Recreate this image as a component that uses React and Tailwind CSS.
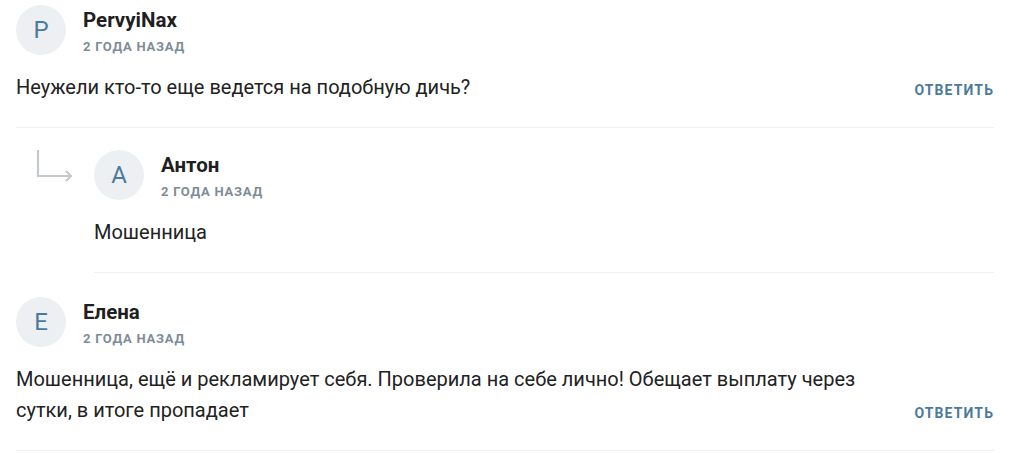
import React from "react";

function Avatar({ letter }) {
  return (
    <div className="flex h-[50px] w-[50px] shrink-0 items-center justify-center rounded-full bg-[#edf0f3] text-[24px] font-normal text-[#4b7a9b]">
      {letter}
    </div>
  );
}

function Header({ letter, name }) {
  return (
    <div className="flex items-center gap-[17px]">
      <Avatar letter={letter} />
      <div className="flex flex-col pt-[2px]">
        <div className="text-[20.5px] font-bold leading-[24px] text-[#1f1f1f]">{name}</div>
        <div className="mt-[7px] text-[13px] font-bold leading-[16px] tracking-[0.06em] text-[#7e8c97]">2 ГОДА НАЗАД</div>
      </div>
    </div>
  );
}

function Reply() {
  return (
    <button className="shrink-0 text-[14px] font-bold leading-[25px] tracking-[0.08em] text-[#4b7a9b]">
      ОТВЕТИТЬ
    </button>
  );
}

function Arrow() {
  return (
    <svg width="40" height="40" viewBox="0 0 40 40" fill="none" className="shrink-0">
      <path d="M2 0 V26 H35" stroke="#c4c9ce" strokeWidth="2.2" />
      <path d="M30 21 L35 26 L30 31" stroke="#c4c9ce" strokeWidth="2.2" />
    </svg>
  );
}

export default function App() {
  return (
    <div className="w-[1024px] bg-white px-4" style={{ fontFamily: "Roboto, 'Liberation Sans', sans-serif" }}>
      <div className="mr-[14px] border-b border-[#eef0f2] pt-[5px] pb-[24px]">
        <Header letter="P" name="PervyiNax" />
        <div className="mt-[17px] flex items-end justify-between">
          <p className="text-[20px] leading-[31px] text-[#222]">Неужели кто-то еще ведется на подобную дичь?</p>
          <Reply />
        </div>
      </div>
      <div className="mr-[14px] flex">
        <div className="w-[78px] shrink-0 pl-[20px] pt-[22px]">
          <Arrow />
        </div>
        <div className="flex-1 border-b border-[#eef0f2] pt-[22px] pb-[24px]">
          <Header letter="A" name="Антон" />
          <p className="mt-[17px] text-[20px] leading-[31px] text-[#222]">Мошенница</p>
        </div>
      </div>
      <div className="mr-[14px] border-b border-[#eef0f2] pt-[24px] pb-[24px]">
        <Header letter="E" name="Елена" />
        <div className="mt-[17px] flex items-end justify-between">
          <p className="max-w-[870px] text-[20px] leading-[31px] text-[#222]">
            Мошенница, ещё и рекламирует себя. Проверила на себе лично! Обещает выплату через сутки, в итоге пропадает
          </p>
          <Reply />
        </div>
      </div>
    </div>
  );
}
